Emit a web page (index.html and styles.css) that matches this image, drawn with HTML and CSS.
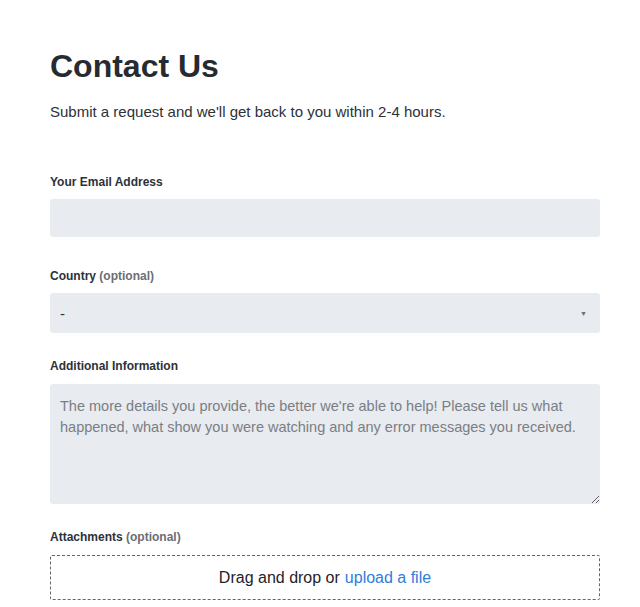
FILE: index.html
```html
<!DOCTYPE html>
<html>
<head>
<meta charset="utf-8">
<link rel="stylesheet" href="styles.css">
</head>
<body>
<main class="page">
  <h1 class="title">Contact Us</h1>
  <p class="intro">Submit a request and we'll get back to you within 2-4 hours.</p>
  <form class="form">
    <div class="field field-email">
      <label class="label">Your Email Address</label>
      <input class="input" type="text">
    </div>
    <div class="field">
      <label class="label">Country <span class="opt">(optional)</span></label>
      <div class="select">
        <span class="select-value">-</span>
        <span class="caret">▼</span>
      </div>
    </div>
    <div class="field">
      <label class="label label-wide">Additional Information</label>
      <textarea class="textarea" placeholder="The more details you provide, the better we're able to help! Please tell us what happened, what show you were watching and any error messages you received."></textarea>
    </div>
    <div class="field">
      <label class="label label-wide">Attachments <span class="opt">(optional)</span></label>
      <div class="drop">Drag and drop or <a class="link">upload a file</a></div>
    </div>
  </form>
</main>
</body>
</html>
```
FILE: styles.css
```css
* { box-sizing: border-box; }
html, body { margin: 0; padding: 0; background: #fff; }
body { font-family: "Liberation Sans", Arial, sans-serif; color: #2d3139; }
.page { width: 550px; margin-left: 50px; padding-top: 47px; }
.title { font-size: 32px; font-weight: 700; margin: 0; line-height: 38px; color: #272b31; }
.intro { font-size: 15px; margin: 18px 0 0; line-height: 18px; color: #2d3139; }
.form { display: flex; flex-direction: column; margin-top: 54px; }
.field { display: flex; flex-direction: column; margin-bottom: 26px; }
.field-email { margin-bottom: 32px; }
.label { font-size: 12px; font-weight: 700; line-height: 14px; margin-bottom: 10px; color: #2d3139; }
.label-wide { margin-bottom: 11px; }
.opt { font-weight: 700; color: #6a6e75; }
.input { height: 38px; border: none; background: #e8ebef; border-radius: 3px; font: inherit; }
.select { height: 40px; background: #e8ebef; border-radius: 3px; display: flex; align-items: center; justify-content: space-between; padding: 0 13px 0 10px; font-size: 15px; }
.caret { font-size: 7px; color: #6a6e75; }
.textarea { height: 120px; border: none; background: #e8ebef; border-radius: 3px; padding: 12px 10px; font-family: "Liberation Sans", Arial, sans-serif; font-size: 14.5px; line-height: 21px; resize: vertical; }
.textarea::placeholder { color: #7a7e85; }
.drop { height: 45px; border: 1px dashed #666; border-radius: 2px; display: flex; align-items: center; justify-content: center; font-size: 16px; color: #1f2329; }
.link { color: #2f7ddc; margin-left: 5px; }
```
